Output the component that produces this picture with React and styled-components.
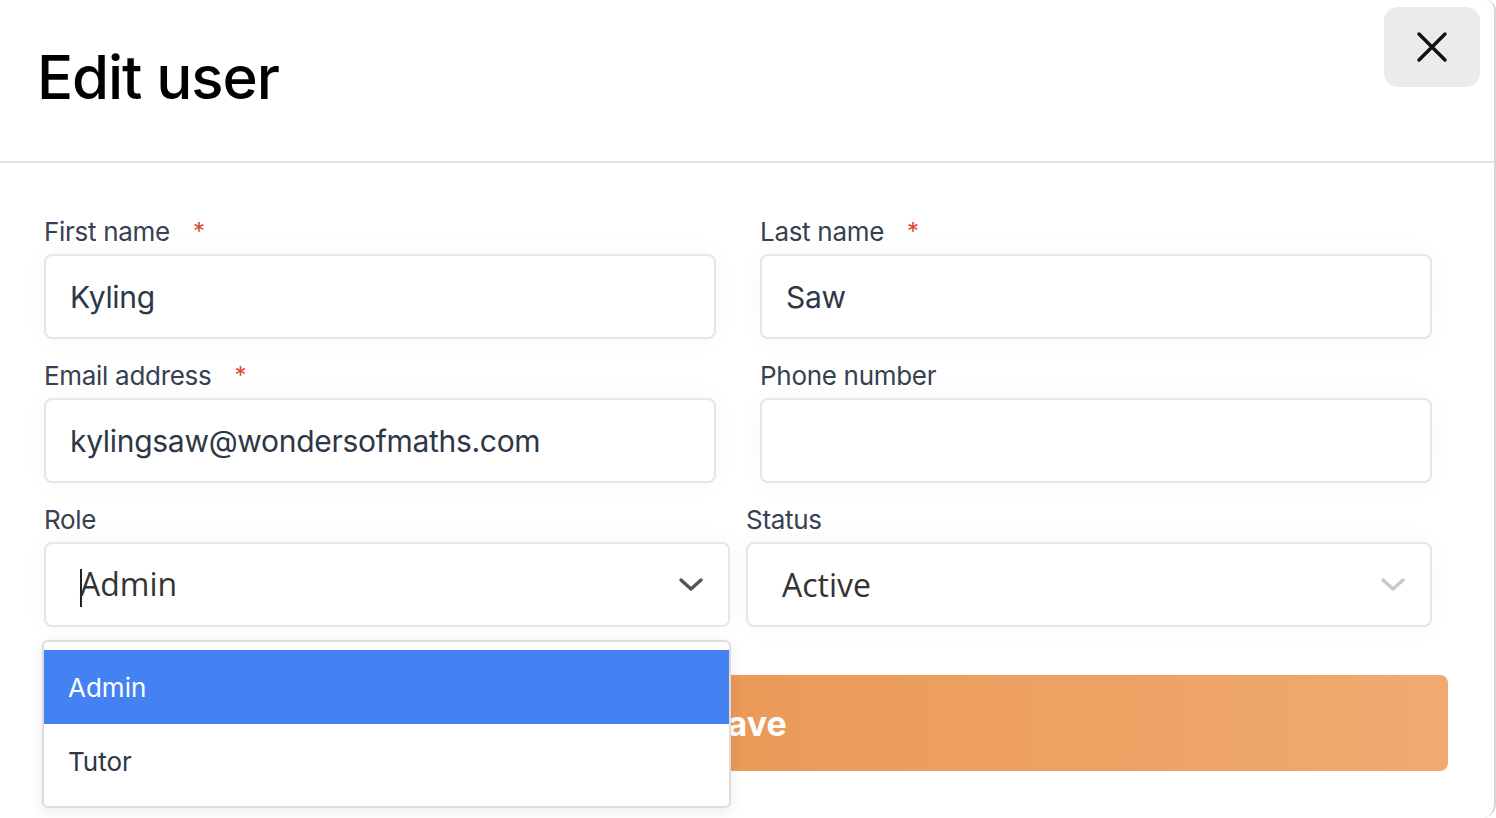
import styled, { createGlobalStyle } from "styled-components";

const GlobalStyle = createGlobalStyle`
  html, body {
    margin: 0;
    padding: 0;
    background: #ffffff;
    overflow: hidden;
  }
  * {
    box-sizing: border-box;
  }
`;

const Modal = styled.div`
  width: 1496px;
  height: 818px;
  background: #fff;
  border-right: 2px solid #d6d6d9;
  border-radius: 0 10px 14px 0;
  font-family: Inter, "Noto Sans", sans-serif;
  overflow: hidden;
`;

const Header = styled.div`
  height: 163px;
  border-bottom: 2px solid #e4e4e8;
  display: flex;
  justify-content: space-between;
  align-items: flex-start;
  padding: 0 14px 0 37px;
`;

const Title = styled.h1`
  margin: 42px 0 0;
  font-size: 60px;
  font-weight: 500;
  letter-spacing: -1.1px;
  color: #000;
  line-height: 70px;
`;

const CloseButton = styled.button`
  margin-top: 7px;
  width: 96px;
  height: 80px;
  border: none;
  border-radius: 14px;
  background: #ebebeb;
  display: flex;
  align-items: center;
  justify-content: center;
  cursor: pointer;
`;

const Body = styled.div`
  padding: 54px 0 0 44px;
`;

const Grid = styled.div`
  display: grid;
  grid-template-columns: ${(p) => p.$col}px ${(p) => p.$col}px;
  column-gap: ${(p) => p.$gap}px;
  row-gap: 22px;
  margin-bottom: ${(p) => p.$bottom || 0}px;
`;

const Field = styled.div`
  position: relative;
  display: flex;
  flex-direction: column;
`;

const Label = styled.label`
  font-size: 26px;
  line-height: 30px;
  color: #374151;
  margin-bottom: 7px;
  display: flex;
  gap: 23px;
  letter-spacing: -0.3px;
`;

const Star = styled.span`
  color: #e0453a;
  font-size: 24px;
`;

const Input = styled.div`
  height: 85px;
  border: 2px solid #e6e6ea;
  border-radius: 8px;
  background: #fff;
  padding: 0 24px;
  display: flex;
  align-items: center;
  font-size: 30px;
  color: #2d3748;
  letter-spacing: -0.3px;
  box-shadow: 0 0 30px rgba(0, 0, 0, 0.03);
`;

const Select = styled.div`
  height: 85px;
  border: 2px solid #e6e6ea;
  border-radius: 8px;
  background: #fff;
  padding: 0 24px 0 34px;
  display: flex;
  align-items: center;
  justify-content: space-between;
  font-family: "Open Sans", sans-serif;
  font-size: 32px;
  color: #333;
  box-shadow: 0 0 30px rgba(0, 0, 0, 0.03);
`;

const Caret = styled.span`
  display: inline-block;
  width: 2px;
  height: 38px;
  background: #222;
  margin-right: -2px;
  vertical-align: middle;
`;

const Menu = styled.div`
  position: absolute;
  top: 135px;
  left: -2px;
  width: 689px;
  background: #fff;
  border: 2px solid #dcdcdc;
  border-radius: 6px;
  padding: 8px 0 7px;
  box-shadow: 0 4px 14px rgba(0, 0, 0, 0.08);
  z-index: 5;
`;

const Option = styled.div`
  height: ${(p) => (p.$active ? 74 : 75)}px;
  padding-left: 24px;
  display: flex;
  align-items: center;
  font-size: 26px;
  color: ${(p) => (p.$active ? "#fff" : "#2d3748")};
  background: ${(p) => (p.$active ? "#4482f4" : "#fff")};
`;

const SaveButton = styled.button`
  margin-top: 48px;
  width: 1404px;
  height: 96px;
  border: none;
  border-radius: 8px;
  background: linear-gradient(90deg, #e78c45 0%, #eb9a58 50%, #f0aa70 100%);
  color: #fff;
  font-family: Inter, sans-serif;
  font-size: 34px;
  font-weight: 700;
  cursor: pointer;
`;

const Chevron = ({ color }) => (
  <svg width="26" height="16" viewBox="0 0 26 16" fill="none">
    <path
      d="M3 3l10 9 10-9"
      stroke={color}
      strokeWidth="3.5"
      strokeLinecap="round"
      strokeLinejoin="round"
    />
  </svg>
);

const CloseIcon = () => (
  <svg width="32" height="32" viewBox="0 0 32 32" fill="none">
    <path
      d="M3 3l26 26M29 3L3 29"
      stroke="#111"
      strokeWidth="3.5"
      strokeLinecap="round"
    />
  </svg>
);

const App = () => {
  return (
    <>
      <GlobalStyle />
      <Modal>
        <Header>
          <Title>Edit user</Title>
          <CloseButton aria-label="Close">
            <CloseIcon />
          </CloseButton>
        </Header>

        <Body>
          <Grid $col={672} $gap={44} $bottom={22}>
            <Field>
              <Label>
                First name <Star>*</Star>
              </Label>
              <Input>Kyling</Input>
            </Field>
            <Field>
              <Label>
                Last name <Star>*</Star>
              </Label>
              <Input>Saw</Input>
            </Field>
            <Field>
              <Label>
                Email address <Star>*</Star>
              </Label>
              <Input>kylingsaw@wondersofmaths.com</Input>
            </Field>
            <Field>
              <Label>Phone number</Label>
              <Input />
            </Field>
          </Grid>

          <Grid $col={686} $gap={16}>
            <Field>
              <Label>Role</Label>
              <Select>
                <span>
                  <Caret />
                  Admin
                </span>
                <Chevron color="#555" />
              </Select>
              <Menu>
                <Option $active>Admin</Option>
                <Option>Tutor</Option>
              </Menu>
            </Field>
            <Field>
              <Label>Status</Label>
              <Select>
                <span>Active</span>
                <Chevron color="#c9c9c9" />
              </Select>
            </Field>
          </Grid>

          <SaveButton>Save</SaveButton>
        </Body>
      </Modal>
    </>
  );
};

export default App;
